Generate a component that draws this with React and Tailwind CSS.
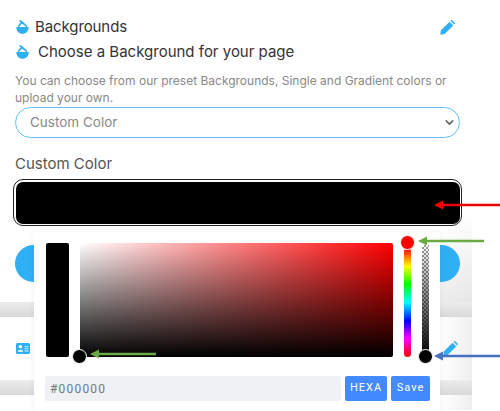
import React from "react";
import { ChevronDown } from "lucide-react";

const font = { fontFamily: "Inter, 'Noto Sans', sans-serif" };
const pickerFont = { fontFamily: "Roboto, 'Noto Sans', sans-serif" };

function BucketIcon() {
  return (
    <svg width="13" height="14" viewBox="0 0 13 14" className="shrink-0">
      <path d="M0.3 7 H12.7 C12.7 11 10 13.8 6.5 13.8 C3 13.8 0.3 11 0.3 7 Z" fill="#2fb0f4" />
      <path d="M2.2 6.6 L6 2.2 L11 6.6" stroke="#2fb0f4" strokeWidth="1.7" fill="none" />
      <path d="M3.6 0.4 L7.8 4" stroke="#2fb0f4" strokeWidth="1.7" fill="none" />
    </svg>
  );
}

function PencilIcon({ size = 15 }) {
  return (
    <svg width={size} height={size} viewBox="0 0 15 15" className="shrink-0">
      <path d="M0.3 14.7 L1 10.3 L9.6 1.8 L13.2 5.4 L4.7 14 Z" fill="#2fb0f4" />
      <path d="M10.6 0.8 L11.2 0.3 Q11.8 -0.1 12.4 0.4 L14.6 2.6 Q15 3.2 14.6 3.8 L14.1 4.4 Z" fill="#2fb0f4" />
    </svg>
  );
}

function Arrow({ className, color, width }) {
  return (
    <svg width={width} height="10" viewBox={`0 0 ${width} 10`} className={className}>
      <path d={`M0 5 L9 0.5 V3.7 H${width} V6.3 H9 V9.5 Z`} fill={color} />
    </svg>
  );
}

function ColorPicker() {
  return (
    <div
      className="absolute left-[34px] top-[232px] h-[179px] w-[406px] bg-white shadow-[0_0_6px_rgba(0,0,0,0.06)]"
      style={pickerFont}
    >
      <div className="flex gap-[11px] pl-3 pt-[11px]">
        <div className="h-[114px] w-[23px] rounded-[2px] bg-black" />
        <div
          className="relative h-[114px] w-[313px] rounded-[2px]"
          style={{
            background:
              "linear-gradient(to top, #000, rgba(0,0,0,0)), linear-gradient(to right, #fff, #f00)",
          }}
        >
          <div className="absolute -bottom-[7px] -left-[8px] h-[15px] w-[15px] rounded-full border border-white bg-black" />
        </div>
        <div
          className="relative mt-[5px] h-[109px] w-[7px] rounded-full"
          style={{
            background:
              "linear-gradient(to bottom, #f00 0%, #ff0 17%, #0f0 33%, #0ff 50%, #00f 67%, #f0f 83%, #f00 100%)",
          }}
        >
          <div className="absolute -left-1 -top-[13px] h-[15px] w-[15px] rounded-full border border-white bg-[#f00]" />
        </div>
        <div
          className="relative mt-[2px] h-[112px] w-[7px]"
          style={{
            background:
              "linear-gradient(to bottom, rgba(0,0,0,0), #000), repeating-conic-gradient(#999 0% 25%, #fff 0% 50%) 0 0 / 4px 4px",
          }}
        >
          <div className="absolute -bottom-[7px] -left-1 h-[15px] w-[15px] rounded-full border border-white bg-black" />
        </div>
      </div>
      <div className="mt-[19px] flex gap-1 pl-[11px]">
        <div className="flex h-[25px] w-[296px] items-center rounded-[2px] bg-[#f0f1f4] pl-[5px] text-[12px] tracking-[1.2px] text-[#777]">
          #000000
        </div>
        <div className="flex h-[25px] w-[42px] items-center justify-center rounded-[2px] bg-[#448aff] text-[11px] tracking-[1px] text-white">
          HEXA
        </div>
        <div className="flex h-[25px] w-[39px] items-center justify-center rounded-[2px] bg-[#448aff] text-[11px] tracking-[1px] text-white">
          Save
        </div>
      </div>
    </div>
  );
}

function Band() {
  return <div className="h-[15px] bg-gradient-to-b from-[#ececec] to-[#d9d9d9]" />;
}

export default function App() {
  return (
    <div className="relative h-[411px] w-[500px] overflow-hidden bg-white" style={font}>
      <div className="w-[472px] overflow-hidden">
        <div className="rounded-bl-[10px] bg-gradient-to-br from-white from-[85%] to-[#e6e6e6] px-[15px] pt-[18px]">
          <div className="flex h-[18px] items-center gap-[6px] pl-[1px] text-[15px] tracking-[-0.1px] text-[#333]">
            <BucketIcon />
            <span>Backgrounds</span>
            <span className="ml-auto mr-[2px]">
              <PencilIcon />
            </span>
          </div>
          <div className="mt-[7px] flex h-[18px] items-center gap-[9px] pl-[1px] text-[15px] text-[#333]">
            <BucketIcon />
            <span>Choose a Background for your page</span>
          </div>
          <p className="mt-[11px] w-[440px] text-[12px] leading-[17px] text-[#888]">
            You can choose from our preset Backgrounds, Single and Gradient colors or upload your own.
          </p>
          <div className="mt-[1px] flex h-[31px] w-[445px] items-center justify-between rounded-full border-[1.5px] border-[#62bff6] pl-[14px] pr-[3px] text-[13.5px] text-[#888]">
            <span>Custom Color</span>
            <ChevronDown size={13} strokeWidth={3} className="text-[#666]" />
          </div>
          <div className="mt-[17px] text-[15px] leading-[18px] text-[#555]">Custom Color</div>
          <div className="-ml-[2px] mt-[6px] h-[47px] w-[449px] rounded-[10px] border-[1.5px] border-[#222] bg-white p-[1.5px]">
            <div className="h-full w-full rounded-[7px] bg-black" />
          </div>
          <div className="mt-[19px] h-[37px] w-[445px] rounded-full bg-[#2fb0f4]" />
          <div className="h-[20px]" />
        </div>

        <Band />

        <div className="flex h-[63px] items-center justify-between rounded-l-[10px] bg-gradient-to-r from-white from-[93%] to-[#efefef] pl-4 pr-[14px]">
          <svg width="14" height="11" viewBox="0 0 14 11">
            <rect width="14" height="11" rx="1.5" fill="#2fb0f4" />
            <circle cx="4.4" cy="3.8" r="1.7" fill="#fff" />
            <path d="M1.7 8.8 C1.7 6 7.1 6 7.1 8.8 Z" fill="#fff" />
            <rect x="8.6" y="3" width="4" height="1.2" fill="#bfe6fc" />
            <rect x="8.6" y="5.2" width="4" height="1.2" fill="#bfe6fc" />
            <rect x="8.6" y="7.4" width="4" height="1.2" fill="#bfe6fc" />
          </svg>
          <PencilIcon />
        </div>

        <Band />

        <div className="h-[15px] rounded-tl-[10px] bg-gradient-to-r from-white from-[93%] to-[#efefef]" />
      </div>

      <ColorPicker />

      <Arrow className="absolute left-[434px] top-[200px]" color="#f00000" width={66} />
      <Arrow className="absolute left-[418px] top-[236px]" color="#6aaa45" width={66} />
      <Arrow className="absolute left-[90px] top-[349px]" color="#6aaa45" width={66} />
      <Arrow className="absolute left-[434px] top-[351px]" color="#4472c4" width={66} />
    </div>
  );
}
